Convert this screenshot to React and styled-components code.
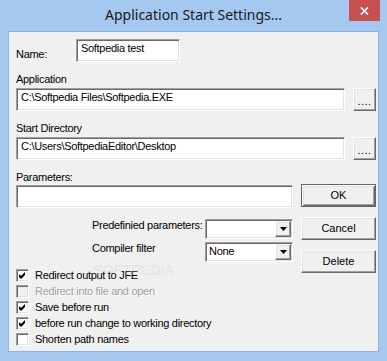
import React from "react";
import styled, { createGlobalStyle, css } from "styled-components";

const GlobalStyle = createGlobalStyle`
  html, body { margin: 0; padding: 0; background: #a5c8f0; }
  * { box-sizing: border-box; }
`;

const FONT = `"Liberation Sans", Arial, sans-serif`;

const Window = styled.div`
  width: 387px;
  height: 361px;
  background: #a5c8f0;
  display: flex;
  flex-direction: column;
  padding: 0 8px 9px 8px;
`;

const TitleBar = styled.div`
  height: 31px;
  display: grid;
  grid-template-columns: 1fr auto 1fr;
  margin: 0 -8px;
`;

const Title = styled.div`
  font-family: "Noto Sans", "Open Sans", sans-serif;
  font-size: 14px;
  line-height: 20px;
  padding-top: 5px;
  color: #1a1a1a;
  white-space: nowrap;
`;

const CloseCell = styled.div`
  display: flex;
  justify-content: flex-end;
  align-items: flex-start;
  padding-right: 7px;
`;

const CloseButton = styled.div`
  width: 31px;
  height: 21px;
  background: #c75050;
  display: flex;
  align-items: center;
  justify-content: center;
`;

const Client = styled.div`
  flex: 1;
  background: #f0f0f0;
  border: 1px solid #8fb3dc;
  padding: 7px 2px 0 7px;
  display: flex;
  flex-direction: column;
  font-family: ${FONT};
  font-size: 11px;
  color: #000;
  position: relative;
`;

const textStyle = css`
  font-family: ${FONT};
  font-size: 11px;
  line-height: 13px;
  letter-spacing: -0.3px;
  white-space: nowrap;
`;

const Text = styled.div`
  ${textStyle};
  color: ${(p) => (p.$disabled ? "#a0a0a0" : "#000")};
  ${(p) => p.$disabled && css`text-shadow: 1px 1px 0 #fff;`}
`;

const NameRow = styled.div`
  display: flex;
  align-items: flex-start;
`;

const NameLabel = styled(Text)`
  width: 60px;
  margin-top: 9px;
`;

const FieldLabel = styled(Text)`
  margin-top: ${(p) => p.$mt ?? 11}px;
`;

const sunken = css`
  background: #fff;
  border: 1px solid;
  border-color: #a0a0a0 #fff #fff #a0a0a0;
  box-shadow: inset 1px 1px 0 #696969, inset -1px -1px 0 #e3e3e3;
`;

const raised = css`
  background: #f0f0f0;
  border: 1px solid;
  border-color: #fff #696969 #696969 #fff;
  box-shadow: inset -1px -1px 0 #a0a0a0, inset 1px 1px 0 #e3e3e3;
`;

const Edit = styled.div`
  ${sunken};
  ${textStyle};
  height: 23px;
  width: ${(p) => (p.$w ? `${p.$w}px` : "auto")};
  flex: ${(p) => (p.$grow ? "1" : "none")};
  padding: 2px 3px 0 4px;
  overflow: hidden;
  margin-top: ${(p) => p.$mt ?? 0}px;
`;

const PathRow = styled.div`
  display: flex;
  gap: 8px;
  margin-top: 2px;
`;

const Button = styled.div`
  ${raised};
  ${textStyle};
  height: 23px;
  width: ${(p) => (p.$w ? `${p.$w}px` : "100%")};
  display: flex;
  align-items: center;
  justify-content: center;
  letter-spacing: 0;
  margin-top: ${(p) => p.$mt ?? 0}px;
  ${(p) =>
    p.$default &&
    css`
      border: 1px solid #646464;
      box-shadow: inset 1px 1px 0 #fff, inset -1px -1px 0 #696969,
        inset 2px 2px 0 #e3e3e3, inset -2px -2px 0 #a0a0a0;
    `}
`;

const BrowseButton = styled(Button)`
  width: 23px;
  flex: none;
  padding-top: 3px;
  letter-spacing: 0.5px;
`;

const Lower = styled.div`
  display: grid;
  grid-template-columns: 277px 75px;
  column-gap: 8px;
  align-items: start;
`;

const Column = styled.div`
  display: flex;
  flex-direction: column;
`;

const ComboRow = styled.div`
  display: flex;
  align-items: flex-start;
  padding-left: 76px;
  margin-top: ${(p) => p.$mt}px;
`;

const ComboLabel = styled(Text)`
  flex: 1;
`;

const Combo = styled.div`
  ${sunken};
  width: 88px;
  height: 20px;
  padding: 1px;
  display: flex;
  align-items: stretch;
`;

const ComboText = styled.div`
  ${textStyle};
  flex: 1;
  padding: 1px 0 0 2px;
`;

const ArrowButton = styled.div`
  ${raised};
  width: 16px;
  display: flex;
  align-items: center;
  justify-content: center;
`;

const CheckList = styled.div`
  display: flex;
  flex-direction: column;
  margin-top: 5px;
`;

const CheckRow = styled.div`
  height: 16px;
  display: flex;
  align-items: center;
  gap: 6px;
`;

const Box = styled.div`
  width: 13px;
  height: 13px;
  background: ${(p) => (p.$disabled ? "#f0f0f0" : "#fff")};
  border: 1px solid;
  border-color: #a0a0a0 #fff #fff #a0a0a0;
  box-shadow: inset 1px 1px 0 #696969, inset -1px -1px 0 #e3e3e3;
  padding: 1px;
  display: flex;
`;

const Watermark = styled.div`
  position: absolute;
  left: 84px;
  top: 230px;
  font-family: "Liberation Sans", sans-serif;
  font-weight: bold;
  font-size: 15px;
  line-height: 16px;
  letter-spacing: -0.5px;
  color: rgba(180, 180, 180, 0.18);
  pointer-events: none;
`;

const Check = () => (
  <svg width="9" height="9" viewBox="0 0 9 9">
    <polygon points="1,3 3,5 7,1 7,4 3,8 1,6" fill="#000" />
  </svg>
);

const Arrow = () => (
  <svg width="7" height="4" viewBox="0 0 7 4">
    <polygon points="0,0 7,0 3.5,4" fill="#000" />
  </svg>
);

const Checkbox = ({ checked, disabled, children }) => (
  <CheckRow>
    <Box $disabled={disabled}>{checked && <Check />}</Box>
    <Text $disabled={disabled}>{children}</Text>
  </CheckRow>
);

export default function App() {
  return (
    <>
      <GlobalStyle />
      <Window>
        <TitleBar>
          <div />
          <Title>Application Start Settings...</Title>
          <CloseCell>
            <CloseButton>
              <svg width="9" height="8" viewBox="0 0 9 8">
                <path d="M1 0.5 L8 7.5 M8 0.5 L1 7.5" stroke="#fff" strokeWidth="1.7" />
              </svg>
            </CloseButton>
          </CloseCell>
        </TitleBar>
        <Client>
          <Watermark aria-hidden="true">SOFTPEDIA</Watermark>
          <NameRow>
            <NameLabel>Name:</NameLabel>
            <Edit $w={104}>Softpedia test</Edit>
          </NameRow>
          <FieldLabel>Application</FieldLabel>
          <PathRow>
            <Edit $grow>C:\Softpedia Files\Softpedia.EXE</Edit>
            <BrowseButton>....</BrowseButton>
          </PathRow>
          <FieldLabel>Start Directory</FieldLabel>
          <PathRow>
            <Edit $grow>C:\Users\SoftpediaEditor\Desktop</Edit>
            <BrowseButton>....</BrowseButton>
          </PathRow>
          <FieldLabel>Parameters:</FieldLabel>
          <Lower>
            <Column>
              <Edit $mt={1} />
              <ComboRow $mt={11}>
                <ComboLabel>Predefinied parameters:</ComboLabel>
                <Combo>
                  <ComboText />
                  <ArrowButton>
                    <Arrow />
                  </ArrowButton>
                </Combo>
              </ComboRow>
              <ComboRow $mt={3}>
                <ComboLabel>Compiler filter</ComboLabel>
                <Combo>
                  <ComboText>None</ComboText>
                  <ArrowButton>
                    <Arrow />
                  </ArrowButton>
                </Combo>
              </ComboRow>
              <CheckList>
                <Checkbox checked>Redirect output to JFE</Checkbox>
                <Checkbox disabled>Redirect into file and open</Checkbox>
                <Checkbox checked>Save before run</Checkbox>
                <Checkbox checked>before run change to working directory</Checkbox>
                <Checkbox>Shorten path names</Checkbox>
              </CheckList>
            </Column>
            <Column>
              <Button $default>OK</Button>
              <Button $mt={10}>Cancel</Button>
              <Button $mt={10}>Delete</Button>
            </Column>
          </Lower>
        </Client>
      </Window>
    </>
  );
}
